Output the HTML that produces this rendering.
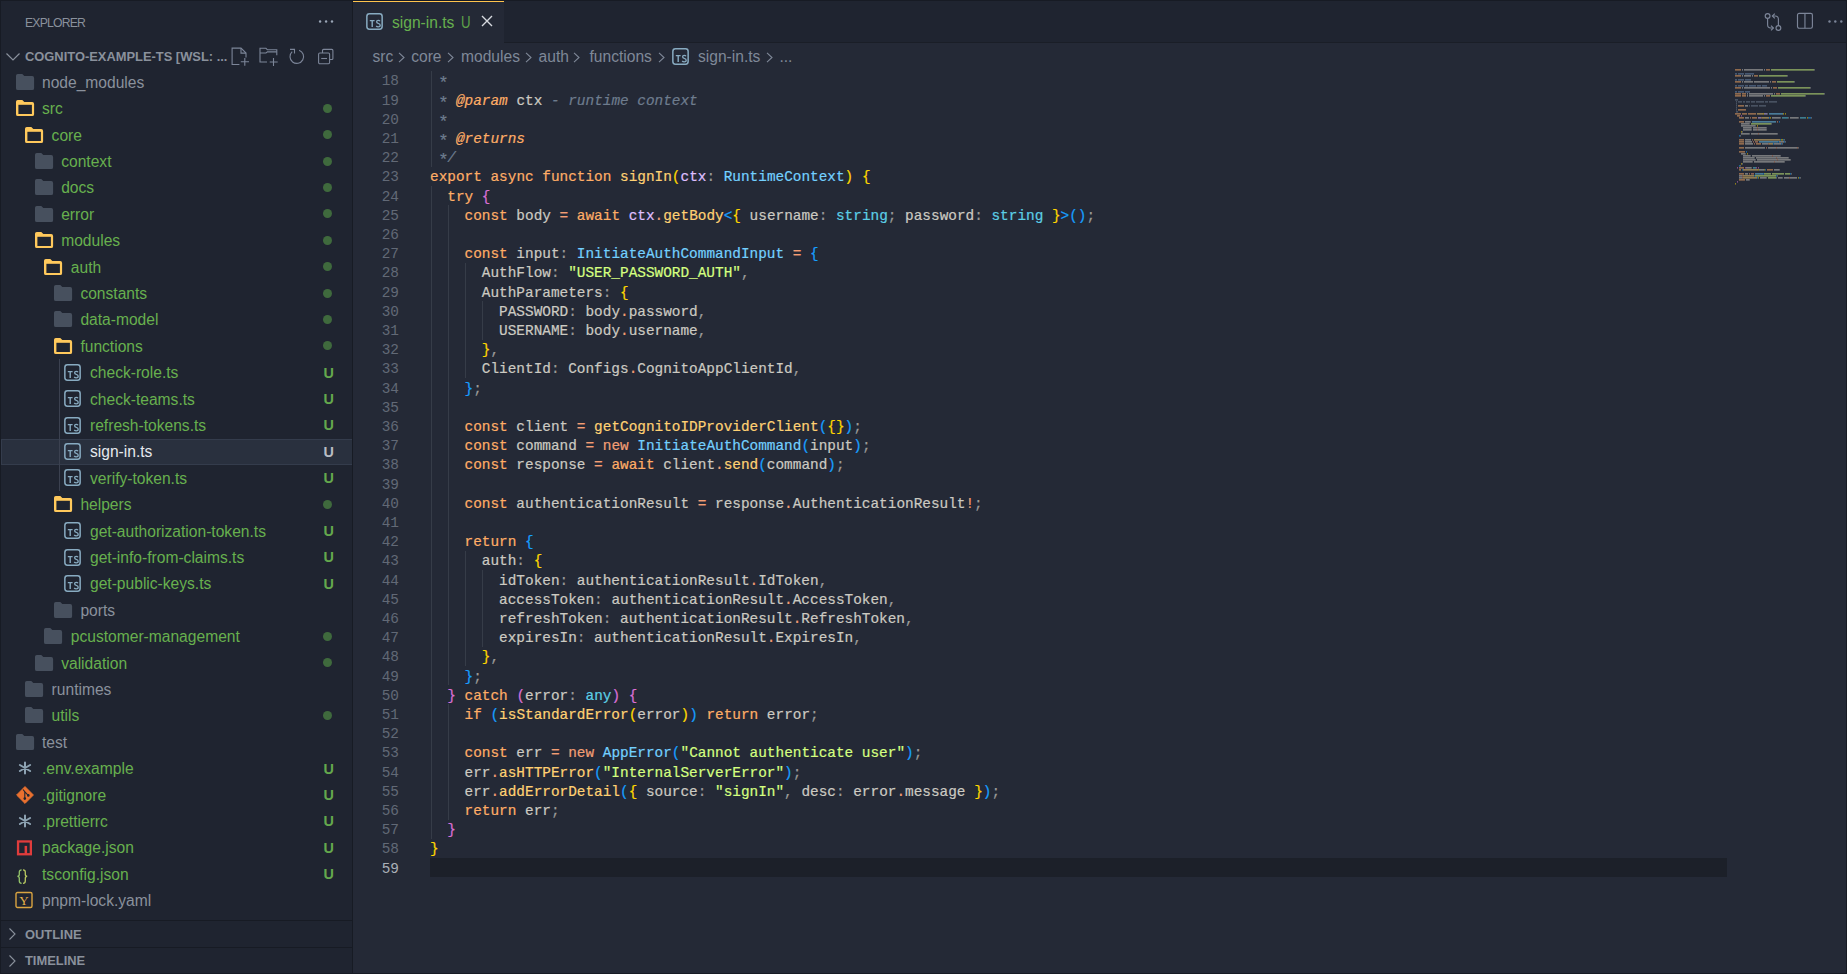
<!DOCTYPE html><html><head><meta charset="utf-8"><style>
*{margin:0;padding:0;box-sizing:border-box}
html,body{width:1847px;height:974px;overflow:hidden;background:#242936}
body{position:relative;font-family:"Liberation Sans",sans-serif}
.a{position:absolute} svg{display:block}
#sb{position:absolute;left:0;top:0;width:353px;height:974px;background:#1f2430;border-right:1px solid #171b24;overflow:hidden}
.row{position:absolute;left:0;width:352px;height:26.4px}
.row .tx{position:absolute;top:1.4px;line-height:26.4px;font-size:15.6px;white-space:nowrap}
.row .ic{position:absolute}
.g{color:#67b04e}
.gr{color:#8a919c}
.deco{position:absolute;left:323.4px;top:0.8px;line-height:26.4px;font-size:14.4px;font-weight:bold;color:#64a84d}
.dotd{position:absolute;left:323px;top:9px;width:9px;height:9px;border-radius:50%;background:#3f6a3d}
#ed{position:absolute;left:353px;top:0;right:0;bottom:0;background:#242936}
#tabs{position:absolute;left:0;top:0;right:0;height:42px;background:#1f2430}
#code{position:absolute;left:0;top:0;font-family:"Liberation Mono",monospace;font-size:14.4px;-webkit-text-stroke:0.2px currentColor}
.ln{-webkit-text-stroke:0;position:absolute;left:0;width:46px;text-align:right;height:19.2px;line-height:19.2px;padding-top:1.5px;color:#626976}
.cl{position:absolute;left:77px;height:19.2px;line-height:19.2px;padding-top:1.5px;white-space:pre;color:#cccac2}
.k{color:#ffad66} .f{color:#ffd173} .f2{color:#ffd173} .t{color:#73d0ff} .pr{color:#5ccfe6} .s{color:#d5ff80}
.v{color:#cccac2} .pp{color:#cccac2} .pa{color:#dfbfff} .pu{color:#9a9a98} .op{color:#f29e74} .dot{color:#f29e74}
.b1{color:#ffd700} .b2{color:#da70d6} .b3{color:#179fff}
.cm{color:#6e7c8e;font-style:italic} .ct{color:#ffad66;font-style:italic} .cv{color:#cccac2} .ast{display:inline-block;transform:translateY(2.8px) scale(1.2);font-style:normal}
.gd{position:absolute;width:1px;background:#363c48}
</style></head><body><div id="sb"><div class="a" style="left:25px;top:15.5px;font-size:12.2px;color:#8a919c;letter-spacing:-0.8px">EXPLORER</div><div class="a" style="left:318px;top:19.5px;width:16px;height:3px"><svg width="16" height="3" viewBox="0 0 16 3"><circle cx="2.1" cy="1.5" r="1.2" fill="#9aa6b6"/><circle cx="8.1" cy="1.5" r="1.2" fill="#9aa6b6"/><circle cx="14" cy="1.5" r="1.2" fill="#9aa6b6"/></svg></div><svg class="a" style="left:5px;top:50px" width="16" height="14" viewBox="0 0 16 14"><path d="M1.5 3.5 L8 10 L14.5 3.5" fill="none" stroke="#8a919c" stroke-width="1.2"/></svg><div class="a" style="left:25px;top:49px;font-size:12.9px;font-weight:bold;color:#8a919c;white-space:nowrap">COGNITO-EXAMPLE-TS [WSL: ...</div><svg class="a" style="left:231px;top:47px" width="20" height="20" viewBox="0 0 20 20" fill="none" stroke="#7c8598" stroke-width="1.1">
<path d="M8.4 17.5 H1.1 V1.1 H10 L15 6.1 V10.5"/><path d="M10 1.1 V6.1 H15"/><path d="M13.8 11 V18.8 M9.8 14.8 H18"/></svg><svg class="a" style="left:259px;top:47px" width="20" height="20" viewBox="0 0 20 20" fill="none" stroke="#7c8598" stroke-width="1.1">
<path d="M8 15 H1 V1.3 H7 L8.4 2.8 H17.8 V8.2"/><path d="M1 6 H7 L8.4 4.9 H17.8"/><path d="M14.5 11 V19 M10.7 15 H18.7"/></svg><svg class="a" style="left:288px;top:47px" width="18" height="18" viewBox="0 0 18 18" fill="none" stroke="#7c8598" stroke-width="1.1">
<path d="M11.1 3.2 A6.8 6.8 0 1 1 4.2 4.6"/><path d="M2 2.4 H6.5 V6.6"/></svg><svg class="a" style="left:317px;top:47px" width="18" height="18" viewBox="0 0 18 18" fill="none" stroke="#7c8598" stroke-width="1.1">
<path d="M5.5 6 V3.4 Q5.5 2.4 6.5 2.4 H14.9 Q15.9 2.4 15.9 3.4 V11.5 Q15.9 12.5 14.9 12.5 H12.6"/><rect x="1.6" y="6" width="11" height="10.7" rx="1.2"/><path d="M4.2 11.5 H10"/></svg><div class="row" style="top:68.4px"><svg class="ic" style="left:14.5px;top:4.4px" width="20" height="18" viewBox="0 0 20 18"><path d="M1 2.8 Q1 1 2.8 1 H7.3 L9.3 3 H17.2 Q19.1 3 19.1 4.9 V15.2 Q19.1 17.1 17.2 17.1 H2.8 Q1 17.1 1 15.2 Z" fill="#47505e"/></svg><div class="tx gr" style="left:42.0px">node_modules</div></div><div class="row" style="top:94.8px"><svg class="ic" style="left:14.5px;top:4.4px" width="20" height="18" viewBox="0 0 20 18"><path d="M1 2.8 Q1 1 2.8 1 H7.3 L9.3 3 H17.2 Q19.1 3 19.1 4.9 V15.2 Q19.1 17.1 17.2 17.1 H2.8 Q1 17.1 1 15.2 Z" fill="#ffc95c"/><rect x="3.4" y="5.8" width="13.5" height="9.2" fill="#1f2430"/></svg><div class="tx g" style="left:42.0px">src</div><div class="dotd"></div></div><div class="row" style="top:121.2px"><svg class="ic" style="left:24.1px;top:4.4px" width="20" height="18" viewBox="0 0 20 18"><path d="M1 2.8 Q1 1 2.8 1 H7.3 L9.3 3 H17.2 Q19.1 3 19.1 4.9 V15.2 Q19.1 17.1 17.2 17.1 H2.8 Q1 17.1 1 15.2 Z" fill="#ffc95c"/><rect x="3.4" y="5.8" width="13.5" height="9.2" fill="#1f2430"/></svg><div class="tx g" style="left:51.6px">core</div><div class="dotd"></div></div><div class="row" style="top:147.6px"><svg class="ic" style="left:33.7px;top:4.4px" width="20" height="18" viewBox="0 0 20 18"><path d="M1 2.8 Q1 1 2.8 1 H7.3 L9.3 3 H17.2 Q19.1 3 19.1 4.9 V15.2 Q19.1 17.1 17.2 17.1 H2.8 Q1 17.1 1 15.2 Z" fill="#47505e"/></svg><div class="tx g" style="left:61.2px">context</div><div class="dotd"></div></div><div class="row" style="top:174.0px"><svg class="ic" style="left:33.7px;top:4.4px" width="20" height="18" viewBox="0 0 20 18"><path d="M1 2.8 Q1 1 2.8 1 H7.3 L9.3 3 H17.2 Q19.1 3 19.1 4.9 V15.2 Q19.1 17.1 17.2 17.1 H2.8 Q1 17.1 1 15.2 Z" fill="#47505e"/></svg><div class="tx g" style="left:61.2px">docs</div><div class="dotd"></div></div><div class="row" style="top:200.4px"><svg class="ic" style="left:33.7px;top:4.4px" width="20" height="18" viewBox="0 0 20 18"><path d="M1 2.8 Q1 1 2.8 1 H7.3 L9.3 3 H17.2 Q19.1 3 19.1 4.9 V15.2 Q19.1 17.1 17.2 17.1 H2.8 Q1 17.1 1 15.2 Z" fill="#47505e"/></svg><div class="tx g" style="left:61.2px">error</div><div class="dotd"></div></div><div class="row" style="top:226.8px"><svg class="ic" style="left:33.7px;top:4.4px" width="20" height="18" viewBox="0 0 20 18"><path d="M1 2.8 Q1 1 2.8 1 H7.3 L9.3 3 H17.2 Q19.1 3 19.1 4.9 V15.2 Q19.1 17.1 17.2 17.1 H2.8 Q1 17.1 1 15.2 Z" fill="#ffc95c"/><rect x="3.4" y="5.8" width="13.5" height="9.2" fill="#1f2430"/></svg><div class="tx g" style="left:61.2px">modules</div><div class="dotd"></div></div><div class="row" style="top:253.2px"><svg class="ic" style="left:43.3px;top:4.4px" width="20" height="18" viewBox="0 0 20 18"><path d="M1 2.8 Q1 1 2.8 1 H7.3 L9.3 3 H17.2 Q19.1 3 19.1 4.9 V15.2 Q19.1 17.1 17.2 17.1 H2.8 Q1 17.1 1 15.2 Z" fill="#ffc95c"/><rect x="3.4" y="5.8" width="13.5" height="9.2" fill="#1f2430"/></svg><div class="tx g" style="left:70.8px">auth</div><div class="dotd"></div></div><div class="row" style="top:279.6px"><svg class="ic" style="left:52.900000000000006px;top:4.4px" width="20" height="18" viewBox="0 0 20 18"><path d="M1 2.8 Q1 1 2.8 1 H7.3 L9.3 3 H17.2 Q19.1 3 19.1 4.9 V15.2 Q19.1 17.1 17.2 17.1 H2.8 Q1 17.1 1 15.2 Z" fill="#47505e"/></svg><div class="tx g" style="left:80.4px">constants</div><div class="dotd"></div></div><div class="row" style="top:306.0px"><svg class="ic" style="left:52.900000000000006px;top:4.4px" width="20" height="18" viewBox="0 0 20 18"><path d="M1 2.8 Q1 1 2.8 1 H7.3 L9.3 3 H17.2 Q19.1 3 19.1 4.9 V15.2 Q19.1 17.1 17.2 17.1 H2.8 Q1 17.1 1 15.2 Z" fill="#47505e"/></svg><div class="tx g" style="left:80.4px">data-model</div><div class="dotd"></div></div><div class="row" style="top:332.4px"><svg class="ic" style="left:52.900000000000006px;top:4.4px" width="20" height="18" viewBox="0 0 20 18"><path d="M1 2.8 Q1 1 2.8 1 H7.3 L9.3 3 H17.2 Q19.1 3 19.1 4.9 V15.2 Q19.1 17.1 17.2 17.1 H2.8 Q1 17.1 1 15.2 Z" fill="#ffc95c"/><rect x="3.4" y="5.8" width="13.5" height="9.2" fill="#1f2430"/></svg><div class="tx g" style="left:80.4px">functions</div><div class="dotd"></div></div><div class="row" style="top:358.8px"><svg class="ic" style="left:64.0px;top:5.1px" width="17" height="17" viewBox="0 0 17 17" fill="none" stroke="#88abc1"><rect x="0.85" y="0.85" width="15.3" height="15.3" rx="2.6" stroke-width="1.5"/><path d="M3.8 7.6 H8.6 M6.2 7.6 V14.1" stroke-width="1.4"/><path d="M14.0 8.2 Q13.5 7.3 12.2 7.3 Q10.6 7.3 10.6 8.7 Q10.6 9.9 12.3 10.4 Q14.2 10.9 14.2 12.3 Q14.2 13.9 12.2 13.9 Q10.9 13.9 10.2 13" stroke-width="1.3"/></svg><div class="tx g" style="left:90.0px">check-role.ts</div><div class="deco">U</div></div><div class="row" style="top:385.2px"><svg class="ic" style="left:64.0px;top:5.1px" width="17" height="17" viewBox="0 0 17 17" fill="none" stroke="#88abc1"><rect x="0.85" y="0.85" width="15.3" height="15.3" rx="2.6" stroke-width="1.5"/><path d="M3.8 7.6 H8.6 M6.2 7.6 V14.1" stroke-width="1.4"/><path d="M14.0 8.2 Q13.5 7.3 12.2 7.3 Q10.6 7.3 10.6 8.7 Q10.6 9.9 12.3 10.4 Q14.2 10.9 14.2 12.3 Q14.2 13.9 12.2 13.9 Q10.9 13.9 10.2 13" stroke-width="1.3"/></svg><div class="tx g" style="left:90.0px">check-teams.ts</div><div class="deco">U</div></div><div class="row" style="top:411.6px"><svg class="ic" style="left:64.0px;top:5.1px" width="17" height="17" viewBox="0 0 17 17" fill="none" stroke="#88abc1"><rect x="0.85" y="0.85" width="15.3" height="15.3" rx="2.6" stroke-width="1.5"/><path d="M3.8 7.6 H8.6 M6.2 7.6 V14.1" stroke-width="1.4"/><path d="M14.0 8.2 Q13.5 7.3 12.2 7.3 Q10.6 7.3 10.6 8.7 Q10.6 9.9 12.3 10.4 Q14.2 10.9 14.2 12.3 Q14.2 13.9 12.2 13.9 Q10.9 13.9 10.2 13" stroke-width="1.3"/></svg><div class="tx g" style="left:90.0px">refresh-tokens.ts</div><div class="deco">U</div></div><div class="row" style="top:438.0px"><div class="a" style="left:1px;top:1.2px;width:351px;height:25.4px;background:#29303e;border-top:1px solid #343c4c;border-bottom:1px solid #343c4c;border-left:1px solid #343c4c"></div><svg class="ic" style="left:64.0px;top:5.1px" width="17" height="17" viewBox="0 0 17 17" fill="none" stroke="#88abc1"><rect x="0.85" y="0.85" width="15.3" height="15.3" rx="2.6" stroke-width="1.5"/><path d="M3.8 7.6 H8.6 M6.2 7.6 V14.1" stroke-width="1.4"/><path d="M14.0 8.2 Q13.5 7.3 12.2 7.3 Q10.6 7.3 10.6 8.7 Q10.6 9.9 12.3 10.4 Q14.2 10.9 14.2 12.3 Q14.2 13.9 12.2 13.9 Q10.9 13.9 10.2 13" stroke-width="1.3"/></svg><div class="tx gr" style="left:90.0px;color:#e6e9ee">sign-in.ts</div><div class="deco" style="color:#b8bcc3">U</div></div><div class="row" style="top:464.4px"><svg class="ic" style="left:64.0px;top:5.1px" width="17" height="17" viewBox="0 0 17 17" fill="none" stroke="#88abc1"><rect x="0.85" y="0.85" width="15.3" height="15.3" rx="2.6" stroke-width="1.5"/><path d="M3.8 7.6 H8.6 M6.2 7.6 V14.1" stroke-width="1.4"/><path d="M14.0 8.2 Q13.5 7.3 12.2 7.3 Q10.6 7.3 10.6 8.7 Q10.6 9.9 12.3 10.4 Q14.2 10.9 14.2 12.3 Q14.2 13.9 12.2 13.9 Q10.9 13.9 10.2 13" stroke-width="1.3"/></svg><div class="tx g" style="left:90.0px">verify-token.ts</div><div class="deco">U</div></div><div class="row" style="top:490.8px"><svg class="ic" style="left:52.900000000000006px;top:4.4px" width="20" height="18" viewBox="0 0 20 18"><path d="M1 2.8 Q1 1 2.8 1 H7.3 L9.3 3 H17.2 Q19.1 3 19.1 4.9 V15.2 Q19.1 17.1 17.2 17.1 H2.8 Q1 17.1 1 15.2 Z" fill="#ffc95c"/><rect x="3.4" y="5.8" width="13.5" height="9.2" fill="#1f2430"/></svg><div class="tx g" style="left:80.4px">helpers</div><div class="dotd"></div></div><div class="row" style="top:517.2px"><svg class="ic" style="left:64.0px;top:5.1px" width="17" height="17" viewBox="0 0 17 17" fill="none" stroke="#88abc1"><rect x="0.85" y="0.85" width="15.3" height="15.3" rx="2.6" stroke-width="1.5"/><path d="M3.8 7.6 H8.6 M6.2 7.6 V14.1" stroke-width="1.4"/><path d="M14.0 8.2 Q13.5 7.3 12.2 7.3 Q10.6 7.3 10.6 8.7 Q10.6 9.9 12.3 10.4 Q14.2 10.9 14.2 12.3 Q14.2 13.9 12.2 13.9 Q10.9 13.9 10.2 13" stroke-width="1.3"/></svg><div class="tx g" style="left:90.0px">get-authorization-token.ts</div><div class="deco">U</div></div><div class="row" style="top:543.6px"><svg class="ic" style="left:64.0px;top:5.1px" width="17" height="17" viewBox="0 0 17 17" fill="none" stroke="#88abc1"><rect x="0.85" y="0.85" width="15.3" height="15.3" rx="2.6" stroke-width="1.5"/><path d="M3.8 7.6 H8.6 M6.2 7.6 V14.1" stroke-width="1.4"/><path d="M14.0 8.2 Q13.5 7.3 12.2 7.3 Q10.6 7.3 10.6 8.7 Q10.6 9.9 12.3 10.4 Q14.2 10.9 14.2 12.3 Q14.2 13.9 12.2 13.9 Q10.9 13.9 10.2 13" stroke-width="1.3"/></svg><div class="tx g" style="left:90.0px">get-info-from-claims.ts</div><div class="deco">U</div></div><div class="row" style="top:570.0px"><svg class="ic" style="left:64.0px;top:5.1px" width="17" height="17" viewBox="0 0 17 17" fill="none" stroke="#88abc1"><rect x="0.85" y="0.85" width="15.3" height="15.3" rx="2.6" stroke-width="1.5"/><path d="M3.8 7.6 H8.6 M6.2 7.6 V14.1" stroke-width="1.4"/><path d="M14.0 8.2 Q13.5 7.3 12.2 7.3 Q10.6 7.3 10.6 8.7 Q10.6 9.9 12.3 10.4 Q14.2 10.9 14.2 12.3 Q14.2 13.9 12.2 13.9 Q10.9 13.9 10.2 13" stroke-width="1.3"/></svg><div class="tx g" style="left:90.0px">get-public-keys.ts</div><div class="deco">U</div></div><div class="row" style="top:596.4px"><svg class="ic" style="left:52.900000000000006px;top:4.4px" width="20" height="18" viewBox="0 0 20 18"><path d="M1 2.8 Q1 1 2.8 1 H7.3 L9.3 3 H17.2 Q19.1 3 19.1 4.9 V15.2 Q19.1 17.1 17.2 17.1 H2.8 Q1 17.1 1 15.2 Z" fill="#47505e"/></svg><div class="tx gr" style="left:80.4px">ports</div></div><div class="row" style="top:622.8px"><svg class="ic" style="left:43.3px;top:4.4px" width="20" height="18" viewBox="0 0 20 18"><path d="M1 2.8 Q1 1 2.8 1 H7.3 L9.3 3 H17.2 Q19.1 3 19.1 4.9 V15.2 Q19.1 17.1 17.2 17.1 H2.8 Q1 17.1 1 15.2 Z" fill="#47505e"/></svg><div class="tx g" style="left:70.8px">pcustomer-management</div><div class="dotd"></div></div><div class="row" style="top:649.2px"><svg class="ic" style="left:33.7px;top:4.4px" width="20" height="18" viewBox="0 0 20 18"><path d="M1 2.8 Q1 1 2.8 1 H7.3 L9.3 3 H17.2 Q19.1 3 19.1 4.9 V15.2 Q19.1 17.1 17.2 17.1 H2.8 Q1 17.1 1 15.2 Z" fill="#47505e"/></svg><div class="tx g" style="left:61.2px">validation</div><div class="dotd"></div></div><div class="row" style="top:675.6px"><svg class="ic" style="left:24.1px;top:4.4px" width="20" height="18" viewBox="0 0 20 18"><path d="M1 2.8 Q1 1 2.8 1 H7.3 L9.3 3 H17.2 Q19.1 3 19.1 4.9 V15.2 Q19.1 17.1 17.2 17.1 H2.8 Q1 17.1 1 15.2 Z" fill="#47505e"/></svg><div class="tx gr" style="left:51.6px">runtimes</div></div><div class="row" style="top:702.0px"><svg class="ic" style="left:24.1px;top:4.4px" width="20" height="18" viewBox="0 0 20 18"><path d="M1 2.8 Q1 1 2.8 1 H7.3 L9.3 3 H17.2 Q19.1 3 19.1 4.9 V15.2 Q19.1 17.1 17.2 17.1 H2.8 Q1 17.1 1 15.2 Z" fill="#47505e"/></svg><div class="tx g" style="left:51.6px">utils</div><div class="dotd"></div></div><div class="row" style="top:728.4px"><svg class="ic" style="left:14.5px;top:4.4px" width="20" height="18" viewBox="0 0 20 18"><path d="M1 2.8 Q1 1 2.8 1 H7.3 L9.3 3 H17.2 Q19.1 3 19.1 4.9 V15.2 Q19.1 17.1 17.2 17.1 H2.8 Q1 17.1 1 15.2 Z" fill="#47505e"/></svg><div class="tx gr" style="left:42.0px">test</div></div><div class="row" style="top:754.8px"><svg class="ic" style="left:14.5px;top:3.7px" width="20" height="20" viewBox="0 0 20 20" stroke="#8ea3b3" stroke-width="2" stroke-linecap="round"><path d="M10 4.6 V15.4 M4.9 7 L15.1 13 M4.9 13 L15.1 7"/></svg><div class="tx g" style="left:42.0px">.env.example</div><div class="deco">U</div></div><div class="row" style="top:781.2px"><svg class="ic" style="left:14.5px;top:3.7px" width="20" height="20" viewBox="0 0 20 20"><path d="M10 1.6 L18.4 10 L10 18.4 L1.6 10 Z" fill="#e8702f" stroke="#e8702f" stroke-width="1" stroke-linejoin="round"/><path d="M8 4.5 L9.8 6.6 V13.5 M9.2 6.2 L13.2 10.3" stroke="#1f2430" stroke-width="1.1" fill="none"/><circle cx="9.8" cy="13.6" r="1.3" fill="#1f2430"/><circle cx="13.3" cy="10.4" r="1.3" fill="#1f2430"/></svg><div class="tx g" style="left:42.0px">.gitignore</div><div class="deco">U</div></div><div class="row" style="top:807.6px"><svg class="ic" style="left:14.5px;top:3.7px" width="20" height="20" viewBox="0 0 20 20" stroke="#8ea3b3" stroke-width="2" stroke-linecap="round"><path d="M10 4.6 V15.4 M4.9 7 L15.1 13 M4.9 13 L15.1 7"/></svg><div class="tx g" style="left:42.0px">.prettierrc</div><div class="deco">U</div></div><div class="row" style="top:834.0px"><svg class="ic" style="left:16px;top:5.6px" width="17" height="17" viewBox="0 0 17 17"><rect x="2.05" y="1.45" width="12.8" height="12.8" fill="none" stroke="#e03c3c" stroke-width="2.3"/><rect x="8.6" y="5.9" width="2.5" height="8" fill="#e03c3c"/></svg><div class="tx g" style="left:42.0px">package.json</div><div class="deco">U</div></div><div class="row" style="top:860.4px"><svg class="ic" style="left:16px;top:8.5px" width="14" height="16" viewBox="0 0 14 16" fill="none" stroke-width="1.3"><path d="M5.6 0.8 Q3.3 0.8 3.3 3 V5.6 Q3.3 7.4 1.4 7.4 Q3.3 7.4 3.3 9.3 V12 Q3.3 14.3 5.6 14.3" stroke="#93c46a"/><path d="M7 0.8 Q9.3 0.8 9.3 3 V5.6 Q9.3 7.4 11.2 7.4 Q9.3 7.4 9.3 9.3 V12 Q9.3 14.3 7 14.3" stroke="#b9c860"/></svg><div class="tx g" style="left:42.0px">tsconfig.json</div><div class="deco">U</div></div><div class="row" style="top:886.8px"><svg class="ic" style="left:14.5px;top:4.2px" width="18" height="18" viewBox="0 0 18 18"><rect x="1" y="1.5" width="16" height="15" rx="1.5" fill="none" stroke="#d9a441" stroke-width="1.4"/><text x="9" y="14" font-family="Liberation Serif" font-size="13" fill="#e8b34a" text-anchor="middle">Y</text></svg><div class="tx gr" style="left:42.0px">pnpm-lock.yaml</div></div><div class="a" style="left:59px;top:358.8px;width:1px;height:132.0px;background:#3b4150"></div><div class="a" style="left:0;top:920.2px;width:352px;height:1px;background:#171b24"></div><svg class="a" style="left:5px;top:926.7px" width="14" height="14" viewBox="0 0 14 14"><path d="M4.5 1.5 L10 7 L4.5 12.5" fill="none" stroke="#8a919c" stroke-width="1.1"/></svg><div class="a" style="left:25px;top:926.5px;font-size:12.9px;font-weight:bold;color:#8a919c">OUTLINE</div><div class="a" style="left:0;top:947.1px;width:352px;height:1px;background:#171b24"></div><svg class="a" style="left:5px;top:953.6px" width="14" height="14" viewBox="0 0 14 14"><path d="M4.5 1.5 L10 7 L4.5 12.5" fill="none" stroke="#8a919c" stroke-width="1.1"/></svg><div class="a" style="left:25px;top:953.4px;font-size:12.9px;font-weight:bold;color:#8a919c">TIMELINE</div></div><div id="ed"><div id="tabs"></div><div class="a" style="left:0;top:0;width:151px;height:43px;background:#242936"></div><div class="a" style="left:0;top:1px;width:151px;height:1.2px;background:#ffc44d"></div><div class="a" style="left:12.5px;top:12.5px"><svg class="a" style="left:0px;top:0px" width="17" height="17" viewBox="0 0 17 17" fill="none" stroke="#88abc1"><rect x="0.85" y="0.85" width="15.3" height="15.3" rx="2.6" stroke-width="1.5"/><path d="M3.8 7.6 H8.6 M6.2 7.6 V14.1" stroke-width="1.4"/><path d="M14.0 8.2 Q13.5 7.3 12.2 7.3 Q10.6 7.3 10.6 8.7 Q10.6 9.9 12.3 10.4 Q14.2 10.9 14.2 12.3 Q14.2 13.9 12.2 13.9 Q10.9 13.9 10.2 13" stroke-width="1.3"/></svg></div><div class="a" style="left:39px;top:13.5px;font-size:15.6px;color:#67b04e;white-space:nowrap">sign-in.ts</div><div class="a" style="left:108px;top:13.5px;font-size:15.6px;color:#5ea049;transform:scaleX(0.85);transform-origin:0 0">U</div><svg class="a" style="left:127px;top:14px" width="14" height="14" viewBox="0 0 14 14"><path d="M2 2 L12 12 M12 2 L2 12" stroke="#d7dae0" stroke-width="1.4"/></svg><svg class="a" style="left:1411px;top:12px" width="22" height="22" viewBox="0 0 22 22" fill="none" stroke="#7c8598" stroke-width="1.15"><circle cx="3.6" cy="4" r="2.4"/><circle cx="14.4" cy="16" r="2.4"/><path d="M3.6 6.4 V12.8 Q3.6 16 6.8 16 H9.4"/><path d="M7 13.6 L9.4 16 L7 18.4"/><path d="M14.4 13.6 V7.2 Q14.4 4 11.2 4 H8.4"/><path d="M10.8 1.6 L8.4 4 L10.8 6.4"/></svg><svg class="a" style="left:1443px;top:12px" width="18" height="18" viewBox="0 0 18 18" fill="none" stroke="#7c8598" stroke-width="1.15"><rect x="1.5" y="1.4" width="14.9" height="14.8" rx="1.6"/><path d="M8.95 1.4 V16.2"/></svg><svg class="a" style="left:1475px;top:20px" width="16" height="3" viewBox="0 0 16 3"><circle cx="1.5" cy="1.5" r="1.2" fill="#7c8598"/><circle cx="7.3" cy="1.5" r="1.2" fill="#7c8598"/><circle cx="13.3" cy="1.5" r="1.2" fill="#7c8598"/></svg><div class="a" style="left:151px;top:42px;right:0;height:1px;background:#1a1e27"></div><div class="a" style="left:19.5px;top:47.6px;font-size:15.6px;color:#7f8898;white-space:nowrap">src</div><div class="a" style="left:58.2px;top:47.6px;font-size:15.6px;color:#7f8898;white-space:nowrap">core</div><div class="a" style="left:108px;top:47.6px;font-size:15.6px;color:#7f8898;white-space:nowrap">modules</div><div class="a" style="left:185.6px;top:47.6px;font-size:15.6px;color:#7f8898;white-space:nowrap">auth</div><div class="a" style="left:236.5px;top:47.6px;font-size:15.6px;color:#7f8898;white-space:nowrap">functions</div><div class="a" style="left:345px;top:47.6px;font-size:15.6px;color:#7f8898;white-space:nowrap">sign-in.ts</div><div class="a" style="left:426.4px;top:47.6px;font-size:15.6px;color:#7f8898;white-space:nowrap">...</div><svg class="a" style="left:44.7px;top:52px" width="9" height="12" viewBox="0 0 9 12"><path d="M1 0.8 L6 5.5 L1 10.2" fill="none" stroke="#7f8898" stroke-width="1.1"/></svg><svg class="a" style="left:93.9px;top:52px" width="9" height="12" viewBox="0 0 9 12"><path d="M1 0.8 L6 5.5 L1 10.2" fill="none" stroke="#7f8898" stroke-width="1.1"/></svg><svg class="a" style="left:172.0px;top:52px" width="9" height="12" viewBox="0 0 9 12"><path d="M1 0.8 L6 5.5 L1 10.2" fill="none" stroke="#7f8898" stroke-width="1.1"/></svg><svg class="a" style="left:220.0px;top:52px" width="9" height="12" viewBox="0 0 9 12"><path d="M1 0.8 L6 5.5 L1 10.2" fill="none" stroke="#7f8898" stroke-width="1.1"/></svg><svg class="a" style="left:304.6px;top:52px" width="9" height="12" viewBox="0 0 9 12"><path d="M1 0.8 L6 5.5 L1 10.2" fill="none" stroke="#7f8898" stroke-width="1.1"/></svg><svg class="a" style="left:413.0px;top:52px" width="9" height="12" viewBox="0 0 9 12"><path d="M1 0.8 L6 5.5 L1 10.2" fill="none" stroke="#7f8898" stroke-width="1.1"/></svg><div class="a" style="left:318.5px;top:47.5px"><svg class="a" style="left:0px;top:0px" width="17" height="17" viewBox="0 0 17 17" fill="none" stroke="#88abc1"><rect x="0.85" y="0.85" width="15.3" height="15.3" rx="2.6" stroke-width="1.5"/><path d="M3.8 7.6 H8.6 M6.2 7.6 V14.1" stroke-width="1.4"/><path d="M14.0 8.2 Q13.5 7.3 12.2 7.3 Q10.6 7.3 10.6 8.7 Q10.6 9.9 12.3 10.4 Q14.2 10.9 14.2 12.3 Q14.2 13.9 12.2 13.9 Q10.9 13.9 10.2 13" stroke-width="1.3"/></svg></div><div id="code" style="left:0;top:0;width:1400px;height:974px"><div class="a" style="left:77px;top:858px;width:1297px;height:19px;background:#1c2029"></div><div class="ln" style="top:70.80px">18</div><div class="cl" style="top:70.80px"><span class="cm"> <span class="ast">*</span></span></div><div class="ln" style="top:90.00px">19</div><div class="cl" style="top:90.00px"><span class="cm"> <span class="ast">*</span> </span><span class="ct">@param</span><span class="cm"> </span><span class="cv">ctx</span><span class="cm"> - runtime context</span></div><div class="ln" style="top:109.20px">20</div><div class="cl" style="top:109.20px"><span class="cm"> <span class="ast">*</span></span></div><div class="ln" style="top:128.40px">21</div><div class="cl" style="top:128.40px"><span class="cm"> <span class="ast">*</span> </span><span class="ct">@returns</span></div><div class="ln" style="top:147.60px">22</div><div class="cl" style="top:147.60px"><span class="cm"> <span class="ast">*</span>/</span></div><div class="ln" style="top:166.80px">23</div><div class="cl" style="top:166.80px"><span class="k">export</span><span class="v"> </span><span class="k">async</span><span class="v"> </span><span class="k">function</span><span class="v"> </span><span class="f">signIn</span><span class="b1">(</span><span class="pa">ctx</span><span class="pu">: </span><span class="t">RuntimeContext</span><span class="b1">)</span><span class="v"> </span><span class="b1">{</span></div><div class="ln" style="top:186.00px">24</div><div class="cl" style="top:186.00px"><span class="v">  </span><span class="k">try</span><span class="v"> </span><span class="b2">{</span></div><div class="ln" style="top:205.20px">25</div><div class="cl" style="top:205.20px"><span class="v">    </span><span class="k">const</span><span class="v"> body </span><span class="op">=</span><span class="v"> </span><span class="k">await</span><span class="v"> </span><span class="pa">ctx</span><span class="dot">.</span><span class="f">getBody</span><span class="b3">&lt;</span><span class="b1">{</span><span class="v"> </span><span class="pp">username</span><span class="pu">: </span><span class="pr">string</span><span class="pu">; </span><span class="pp">password</span><span class="pu">: </span><span class="pr">string</span><span class="v"> </span><span class="b1">}</span><span class="b3">&gt;()</span><span class="pu">;</span></div><div class="ln" style="top:224.40px">26</div><div class="ln" style="top:243.60px">27</div><div class="cl" style="top:243.60px"><span class="v">    </span><span class="k">const</span><span class="v"> input</span><span class="pu">: </span><span class="t">InitiateAuthCommandInput</span><span class="v"> </span><span class="op">=</span><span class="v"> </span><span class="b3">{</span></div><div class="ln" style="top:262.80px">28</div><div class="cl" style="top:262.80px"><span class="v">      AuthFlow</span><span class="pu">: </span><span class="s">&quot;USER_PASSWORD_AUTH&quot;</span><span class="pu">,</span></div><div class="ln" style="top:282.00px">29</div><div class="cl" style="top:282.00px"><span class="v">      AuthParameters</span><span class="pu">: </span><span class="b1">{</span></div><div class="ln" style="top:301.20px">30</div><div class="cl" style="top:301.20px"><span class="v">        PASSWORD</span><span class="pu">: </span><span class="v">body</span><span class="dot">.</span><span class="v">password</span><span class="pu">,</span></div><div class="ln" style="top:320.40px">31</div><div class="cl" style="top:320.40px"><span class="v">        USERNAME</span><span class="pu">: </span><span class="v">body</span><span class="dot">.</span><span class="v">username</span><span class="pu">,</span></div><div class="ln" style="top:339.60px">32</div><div class="cl" style="top:339.60px"><span class="v">      </span><span class="b1">}</span><span class="pu">,</span></div><div class="ln" style="top:358.80px">33</div><div class="cl" style="top:358.80px"><span class="v">      ClientId</span><span class="pu">: </span><span class="v">Configs</span><span class="dot">.</span><span class="v">CognitoAppClientId</span><span class="pu">,</span></div><div class="ln" style="top:378.00px">34</div><div class="cl" style="top:378.00px"><span class="v">    </span><span class="b3">}</span><span class="pu">;</span></div><div class="ln" style="top:397.20px">35</div><div class="ln" style="top:416.40px">36</div><div class="cl" style="top:416.40px"><span class="v">    </span><span class="k">const</span><span class="v"> client </span><span class="op">=</span><span class="v"> </span><span class="f">getCognitoIDProviderClient</span><span class="b3">(</span><span class="b1">{}</span><span class="b3">)</span><span class="pu">;</span></div><div class="ln" style="top:435.60px">37</div><div class="cl" style="top:435.60px"><span class="v">    </span><span class="k">const</span><span class="v"> command </span><span class="op">=</span><span class="v"> </span><span class="op">new</span><span class="v"> </span><span class="t">InitiateAuthCommand</span><span class="b3">(</span><span class="v">input</span><span class="b3">)</span><span class="pu">;</span></div><div class="ln" style="top:454.80px">38</div><div class="cl" style="top:454.80px"><span class="v">    </span><span class="k">const</span><span class="v"> response </span><span class="op">=</span><span class="v"> </span><span class="k">await</span><span class="v"> client</span><span class="dot">.</span><span class="f">send</span><span class="b3">(</span><span class="v">command</span><span class="b3">)</span><span class="pu">;</span></div><div class="ln" style="top:474.00px">39</div><div class="ln" style="top:493.20px">40</div><div class="cl" style="top:493.20px"><span class="v">    </span><span class="k">const</span><span class="v"> authenticationResult </span><span class="op">=</span><span class="v"> response</span><span class="dot">.</span><span class="v">AuthenticationResult</span><span class="op">!</span><span class="pu">;</span></div><div class="ln" style="top:512.40px">41</div><div class="ln" style="top:531.60px">42</div><div class="cl" style="top:531.60px"><span class="v">    </span><span class="k">return</span><span class="v"> </span><span class="b3">{</span></div><div class="ln" style="top:550.80px">43</div><div class="cl" style="top:550.80px"><span class="v">      auth</span><span class="pu">: </span><span class="b1">{</span></div><div class="ln" style="top:570.00px">44</div><div class="cl" style="top:570.00px"><span class="v">        idToken</span><span class="pu">: </span><span class="v">authenticationResult</span><span class="dot">.</span><span class="v">IdToken</span><span class="pu">,</span></div><div class="ln" style="top:589.20px">45</div><div class="cl" style="top:589.20px"><span class="v">        accessToken</span><span class="pu">: </span><span class="v">authenticationResult</span><span class="dot">.</span><span class="v">AccessToken</span><span class="pu">,</span></div><div class="ln" style="top:608.40px">46</div><div class="cl" style="top:608.40px"><span class="v">        refreshToken</span><span class="pu">: </span><span class="v">authenticationResult</span><span class="dot">.</span><span class="v">RefreshToken</span><span class="pu">,</span></div><div class="ln" style="top:627.60px">47</div><div class="cl" style="top:627.60px"><span class="v">        expiresIn</span><span class="pu">: </span><span class="v">authenticationResult</span><span class="dot">.</span><span class="v">ExpiresIn</span><span class="pu">,</span></div><div class="ln" style="top:646.80px">48</div><div class="cl" style="top:646.80px"><span class="v">      </span><span class="b1">}</span><span class="pu">,</span></div><div class="ln" style="top:666.00px">49</div><div class="cl" style="top:666.00px"><span class="v">    </span><span class="b3">}</span><span class="pu">;</span></div><div class="ln" style="top:685.20px">50</div><div class="cl" style="top:685.20px"><span class="v">  </span><span class="b2">}</span><span class="v"> </span><span class="k">catch</span><span class="v"> </span><span class="b2">(</span><span class="v">error</span><span class="pu">: </span><span class="pr">any</span><span class="b2">)</span><span class="v"> </span><span class="b2">{</span></div><div class="ln" style="top:704.40px">51</div><div class="cl" style="top:704.40px"><span class="v">    </span><span class="k">if</span><span class="v"> </span><span class="b3">(</span><span class="f2">isStandardError</span><span class="b1">(</span><span class="v">error</span><span class="b1">)</span><span class="b3">)</span><span class="v"> </span><span class="k">return</span><span class="v"> error</span><span class="pu">;</span></div><div class="ln" style="top:723.60px">52</div><div class="ln" style="top:742.80px">53</div><div class="cl" style="top:742.80px"><span class="v">    </span><span class="k">const</span><span class="v"> err </span><span class="op">=</span><span class="v"> </span><span class="op">new</span><span class="v"> </span><span class="t">AppError</span><span class="b3">(</span><span class="s">&quot;Cannot authenticate user&quot;</span><span class="b3">)</span><span class="pu">;</span></div><div class="ln" style="top:762.00px">54</div><div class="cl" style="top:762.00px"><span class="v">    err</span><span class="dot">.</span><span class="f">asHTTPError</span><span class="b3">(</span><span class="s">&quot;InternalServerError&quot;</span><span class="b3">)</span><span class="pu">;</span></div><div class="ln" style="top:781.20px">55</div><div class="cl" style="top:781.20px"><span class="v">    err</span><span class="dot">.</span><span class="f">addErrorDetail</span><span class="b3">(</span><span class="b1">{</span><span class="v"> source</span><span class="pu">: </span><span class="s">&quot;signIn&quot;</span><span class="pu">, </span><span class="v">desc</span><span class="pu">: </span><span class="v">error</span><span class="dot">.</span><span class="v">message</span><span class="v"> </span><span class="b1">}</span><span class="b3">)</span><span class="pu">;</span></div><div class="ln" style="top:800.40px">56</div><div class="cl" style="top:800.40px"><span class="v">    </span><span class="k">return</span><span class="v"> err</span><span class="pu">;</span></div><div class="ln" style="top:819.60px">57</div><div class="cl" style="top:819.60px"><span class="v">  </span><span class="b2">}</span></div><div class="ln" style="top:838.80px">58</div><div class="cl" style="top:838.80px"><span class="b1">}</span></div><div class="ln" style="top:858.00px;color:#aab0b8">59</div><div class="gd" style="left:77.6px;top:70.80px;height:96.00px"></div><div class="gd" style="left:77.6px;top:186.00px;height:652.80px"></div><div class="gd" style="left:94.9px;top:205.20px;height:480.00px"></div><div class="gd" style="left:94.9px;top:704.40px;height:115.20px"></div><div class="gd" style="left:112.1px;top:262.80px;height:115.20px"></div><div class="gd" style="left:112.1px;top:550.80px;height:115.20px"></div><div class="gd" style="left:129.4px;top:301.20px;height:38.40px"></div><div class="gd" style="left:129.4px;top:570.00px;height:76.80px"></div></div><svg class="a" style="left:1382px;top:69.3px;opacity:0.55" width="120" height="120" viewBox="0 0 120 120"><rect x="0" y="0.1" width="6" height="1.5" fill="#ffad66"/><rect x="7" y="0.1" width="1" height="1.5" fill="#cccac2"/><rect x="9" y="0.1" width="19" height="1.5" fill="#cccac2"/><rect x="29" y="0.1" width="1" height="1.5" fill="#cccac2"/><rect x="31" y="0.1" width="4" height="1.5" fill="#ffad66"/><rect x="36" y="0.1" width="43" height="1.5" fill="#d5ff80"/><rect x="79" y="0.1" width="1" height="1.5" fill="#9a9a98"/><rect x="0" y="4.1" width="2" height="1.5" fill="#6a8ab0"/><rect x="3" y="4.1" width="6" height="1.5" fill="#6a8ab0"/><rect x="10" y="4.1" width="9" height="1.5" fill="#6a8ab0"/><rect x="0" y="6.1" width="6" height="1.5" fill="#ffad66"/><rect x="7" y="6.1" width="1" height="1.5" fill="#cccac2"/><rect x="9" y="6.1" width="7" height="1.5" fill="#cccac2"/><rect x="17" y="6.1" width="1" height="1.5" fill="#cccac2"/><rect x="19" y="6.1" width="4" height="1.5" fill="#ffad66"/><rect x="24" y="6.1" width="28" height="1.5" fill="#d5ff80"/><rect x="52" y="6.1" width="1" height="1.5" fill="#9a9a98"/><rect x="0" y="10.1" width="2" height="1.5" fill="#6a8ab0"/><rect x="3" y="10.1" width="6" height="1.5" fill="#6a8ab0"/><rect x="10" y="10.1" width="6" height="1.5" fill="#6a8ab0"/><rect x="0" y="12.1" width="6" height="1.5" fill="#ffad66"/><rect x="7" y="12.1" width="1" height="1.5" fill="#cccac2"/><rect x="9" y="12.1" width="9" height="1.5" fill="#cccac2"/><rect x="19" y="12.1" width="15" height="1.5" fill="#cccac2"/><rect x="35" y="12.1" width="1" height="1.5" fill="#cccac2"/><rect x="37" y="12.1" width="4" height="1.5" fill="#ffad66"/><rect x="42" y="12.1" width="17" height="1.5" fill="#d5ff80"/><rect x="59" y="12.1" width="1" height="1.5" fill="#9a9a98"/><rect x="0" y="16.1" width="2" height="1.5" fill="#6a8ab0"/><rect x="3" y="16.1" width="6" height="1.5" fill="#6a8ab0"/><rect x="10" y="16.1" width="3" height="1.5" fill="#6a8ab0"/><rect x="14" y="16.1" width="7" height="1.5" fill="#6a8ab0"/><rect x="22" y="16.1" width="4" height="1.5" fill="#6a8ab0"/><rect x="27" y="16.1" width="5" height="1.5" fill="#6a8ab0"/><rect x="0" y="18.1" width="6" height="1.5" fill="#ffad66"/><rect x="7" y="18.1" width="1" height="1.5" fill="#cccac2"/><rect x="9" y="18.1" width="26" height="1.5" fill="#cccac2"/><rect x="36" y="18.1" width="1" height="1.5" fill="#cccac2"/><rect x="38" y="18.1" width="4" height="1.5" fill="#ffad66"/><rect x="43" y="18.1" width="32" height="1.5" fill="#d5ff80"/><rect x="75" y="18.1" width="1" height="1.5" fill="#9a9a98"/><rect x="0" y="22.1" width="2" height="1.5" fill="#6a8ab0"/><rect x="3" y="22.1" width="6" height="1.5" fill="#6a8ab0"/><rect x="10" y="22.1" width="5" height="1.5" fill="#6a8ab0"/><rect x="0" y="24.1" width="6" height="1.5" fill="#ffad66"/><rect x="7" y="24.1" width="4" height="1.5" fill="#ffad66"/><rect x="12" y="24.1" width="1" height="1.5" fill="#cccac2"/><rect x="14" y="24.1" width="24" height="1.5" fill="#cccac2"/><rect x="39" y="24.1" width="1" height="1.5" fill="#cccac2"/><rect x="41" y="24.1" width="4" height="1.5" fill="#ffad66"/><rect x="46" y="24.1" width="43" height="1.5" fill="#d5ff80"/><rect x="89" y="24.1" width="1" height="1.5" fill="#9a9a98"/><rect x="0" y="26.1" width="6" height="1.5" fill="#ffad66"/><rect x="7" y="26.1" width="4" height="1.5" fill="#ffad66"/><rect x="12" y="26.1" width="1" height="1.5" fill="#cccac2"/><rect x="14" y="26.1" width="14" height="1.5" fill="#cccac2"/><rect x="29" y="26.1" width="1" height="1.5" fill="#cccac2"/><rect x="31" y="26.1" width="4" height="1.5" fill="#ffad66"/><rect x="36" y="26.1" width="34" height="1.5" fill="#d5ff80"/><rect x="70" y="26.1" width="1" height="1.5" fill="#9a9a98"/><rect x="0" y="30.1" width="3" height="1.5" fill="#6e7c8e"/><rect x="1" y="32.1" width="1" height="1.5" fill="#6e7c8e"/><rect x="3" y="32.1" width="4" height="1.5" fill="#6e7c8e"/><rect x="8" y="32.1" width="2" height="1.5" fill="#6e7c8e"/><rect x="11" y="32.1" width="4" height="1.5" fill="#6e7c8e"/><rect x="16" y="32.1" width="4" height="1.5" fill="#6e7c8e"/><rect x="21" y="32.1" width="8" height="1.5" fill="#6e7c8e"/><rect x="30" y="32.1" width="3" height="1.5" fill="#6e7c8e"/><rect x="34" y="32.1" width="8" height="1.5" fill="#6e7c8e"/><rect x="1" y="34.1" width="1" height="1.5" fill="#6e7c8e"/><rect x="1" y="36.1" width="1" height="1.5" fill="#6e7c8e"/><rect x="3" y="36.1" width="6" height="1.5" fill="#ffad66"/><rect x="10" y="36.1" width="3" height="1.5" fill="#cccac2"/><rect x="14" y="36.1" width="1" height="1.5" fill="#6e7c8e"/><rect x="16" y="36.1" width="7" height="1.5" fill="#6e7c8e"/><rect x="24" y="36.1" width="7" height="1.5" fill="#6e7c8e"/><rect x="1" y="38.1" width="1" height="1.5" fill="#6e7c8e"/><rect x="1" y="40.1" width="1" height="1.5" fill="#6e7c8e"/><rect x="3" y="40.1" width="8" height="1.5" fill="#ffad66"/><rect x="1" y="42.1" width="2" height="1.5" fill="#6e7c8e"/><rect x="0" y="44.1" width="6" height="1.5" fill="#ffad66"/><rect x="7" y="44.1" width="5" height="1.5" fill="#ffad66"/><rect x="13" y="44.1" width="8" height="1.5" fill="#ffad66"/><rect x="22" y="44.1" width="6" height="1.5" fill="#ffd173"/><rect x="28" y="44.1" width="1" height="1.5" fill="#ffd700"/><rect x="29" y="44.1" width="3" height="1.5" fill="#dfbfff"/><rect x="32" y="44.1" width="1" height="1.5" fill="#9a9a98"/><rect x="34" y="44.1" width="14" height="1.5" fill="#73d0ff"/><rect x="48" y="44.1" width="1" height="1.5" fill="#ffd700"/><rect x="50" y="44.1" width="1" height="1.5" fill="#ffd700"/><rect x="2" y="46.1" width="3" height="1.5" fill="#ffad66"/><rect x="6" y="46.1" width="1" height="1.5" fill="#da70d6"/><rect x="4" y="48.1" width="5" height="1.5" fill="#ffad66"/><rect x="10" y="48.1" width="4" height="1.5" fill="#cccac2"/><rect x="15" y="48.1" width="1" height="1.5" fill="#f29e74"/><rect x="17" y="48.1" width="5" height="1.5" fill="#ffad66"/><rect x="23" y="48.1" width="3" height="1.5" fill="#dfbfff"/><rect x="26" y="48.1" width="1" height="1.5" fill="#f29e74"/><rect x="27" y="48.1" width="7" height="1.5" fill="#ffd173"/><rect x="34" y="48.1" width="1" height="1.5" fill="#179fff"/><rect x="35" y="48.1" width="1" height="1.5" fill="#ffd700"/><rect x="37" y="48.1" width="8" height="1.5" fill="#cccac2"/><rect x="45" y="48.1" width="1" height="1.5" fill="#9a9a98"/><rect x="47" y="48.1" width="6" height="1.5" fill="#5ccfe6"/><rect x="53" y="48.1" width="1" height="1.5" fill="#9a9a98"/><rect x="55" y="48.1" width="8" height="1.5" fill="#cccac2"/><rect x="63" y="48.1" width="1" height="1.5" fill="#9a9a98"/><rect x="65" y="48.1" width="6" height="1.5" fill="#5ccfe6"/><rect x="72" y="48.1" width="1" height="1.5" fill="#ffd700"/><rect x="73" y="48.1" width="3" height="1.5" fill="#179fff"/><rect x="76" y="48.1" width="1" height="1.5" fill="#9a9a98"/><rect x="4" y="52.1" width="5" height="1.5" fill="#ffad66"/><rect x="10" y="52.1" width="5" height="1.5" fill="#cccac2"/><rect x="15" y="52.1" width="1" height="1.5" fill="#9a9a98"/><rect x="17" y="52.1" width="24" height="1.5" fill="#73d0ff"/><rect x="42" y="52.1" width="1" height="1.5" fill="#f29e74"/><rect x="44" y="52.1" width="1" height="1.5" fill="#179fff"/><rect x="6" y="54.1" width="8" height="1.5" fill="#cccac2"/><rect x="14" y="54.1" width="1" height="1.5" fill="#9a9a98"/><rect x="16" y="54.1" width="20" height="1.5" fill="#d5ff80"/><rect x="36" y="54.1" width="1" height="1.5" fill="#9a9a98"/><rect x="6" y="56.1" width="14" height="1.5" fill="#cccac2"/><rect x="20" y="56.1" width="1" height="1.5" fill="#9a9a98"/><rect x="22" y="56.1" width="1" height="1.5" fill="#ffd700"/><rect x="8" y="58.1" width="8" height="1.5" fill="#cccac2"/><rect x="16" y="58.1" width="1" height="1.5" fill="#9a9a98"/><rect x="18" y="58.1" width="4" height="1.5" fill="#cccac2"/><rect x="22" y="58.1" width="1" height="1.5" fill="#f29e74"/><rect x="23" y="58.1" width="8" height="1.5" fill="#cccac2"/><rect x="31" y="58.1" width="1" height="1.5" fill="#9a9a98"/><rect x="8" y="60.1" width="8" height="1.5" fill="#cccac2"/><rect x="16" y="60.1" width="1" height="1.5" fill="#9a9a98"/><rect x="18" y="60.1" width="4" height="1.5" fill="#cccac2"/><rect x="22" y="60.1" width="1" height="1.5" fill="#f29e74"/><rect x="23" y="60.1" width="8" height="1.5" fill="#cccac2"/><rect x="31" y="60.1" width="1" height="1.5" fill="#9a9a98"/><rect x="6" y="62.1" width="1" height="1.5" fill="#ffd700"/><rect x="7" y="62.1" width="1" height="1.5" fill="#9a9a98"/><rect x="6" y="64.1" width="8" height="1.5" fill="#cccac2"/><rect x="14" y="64.1" width="1" height="1.5" fill="#9a9a98"/><rect x="16" y="64.1" width="7" height="1.5" fill="#cccac2"/><rect x="23" y="64.1" width="1" height="1.5" fill="#f29e74"/><rect x="24" y="64.1" width="18" height="1.5" fill="#cccac2"/><rect x="42" y="64.1" width="1" height="1.5" fill="#9a9a98"/><rect x="4" y="66.1" width="1" height="1.5" fill="#179fff"/><rect x="5" y="66.1" width="1" height="1.5" fill="#9a9a98"/><rect x="4" y="70.1" width="5" height="1.5" fill="#ffad66"/><rect x="10" y="70.1" width="6" height="1.5" fill="#cccac2"/><rect x="17" y="70.1" width="1" height="1.5" fill="#f29e74"/><rect x="19" y="70.1" width="26" height="1.5" fill="#ffd173"/><rect x="45" y="70.1" width="1" height="1.5" fill="#179fff"/><rect x="46" y="70.1" width="2" height="1.5" fill="#ffd700"/><rect x="48" y="70.1" width="1" height="1.5" fill="#179fff"/><rect x="49" y="70.1" width="1" height="1.5" fill="#9a9a98"/><rect x="4" y="72.1" width="5" height="1.5" fill="#ffad66"/><rect x="10" y="72.1" width="7" height="1.5" fill="#cccac2"/><rect x="18" y="72.1" width="1" height="1.5" fill="#f29e74"/><rect x="20" y="72.1" width="3" height="1.5" fill="#f29e74"/><rect x="24" y="72.1" width="19" height="1.5" fill="#73d0ff"/><rect x="43" y="72.1" width="1" height="1.5" fill="#179fff"/><rect x="44" y="72.1" width="5" height="1.5" fill="#cccac2"/><rect x="49" y="72.1" width="1" height="1.5" fill="#179fff"/><rect x="50" y="72.1" width="1" height="1.5" fill="#9a9a98"/><rect x="4" y="74.1" width="5" height="1.5" fill="#ffad66"/><rect x="10" y="74.1" width="8" height="1.5" fill="#cccac2"/><rect x="19" y="74.1" width="1" height="1.5" fill="#f29e74"/><rect x="21" y="74.1" width="5" height="1.5" fill="#ffad66"/><rect x="27" y="74.1" width="6" height="1.5" fill="#cccac2"/><rect x="33" y="74.1" width="1" height="1.5" fill="#f29e74"/><rect x="34" y="74.1" width="4" height="1.5" fill="#ffd173"/><rect x="38" y="74.1" width="1" height="1.5" fill="#179fff"/><rect x="39" y="74.1" width="7" height="1.5" fill="#cccac2"/><rect x="46" y="74.1" width="1" height="1.5" fill="#179fff"/><rect x="47" y="74.1" width="1" height="1.5" fill="#9a9a98"/><rect x="4" y="78.1" width="5" height="1.5" fill="#ffad66"/><rect x="10" y="78.1" width="20" height="1.5" fill="#cccac2"/><rect x="31" y="78.1" width="1" height="1.5" fill="#f29e74"/><rect x="33" y="78.1" width="8" height="1.5" fill="#cccac2"/><rect x="41" y="78.1" width="1" height="1.5" fill="#f29e74"/><rect x="42" y="78.1" width="20" height="1.5" fill="#cccac2"/><rect x="62" y="78.1" width="1" height="1.5" fill="#f29e74"/><rect x="63" y="78.1" width="1" height="1.5" fill="#9a9a98"/><rect x="4" y="82.1" width="6" height="1.5" fill="#ffad66"/><rect x="11" y="82.1" width="1" height="1.5" fill="#179fff"/><rect x="6" y="84.1" width="4" height="1.5" fill="#cccac2"/><rect x="10" y="84.1" width="1" height="1.5" fill="#9a9a98"/><rect x="12" y="84.1" width="1" height="1.5" fill="#ffd700"/><rect x="8" y="86.1" width="7" height="1.5" fill="#cccac2"/><rect x="15" y="86.1" width="1" height="1.5" fill="#9a9a98"/><rect x="17" y="86.1" width="20" height="1.5" fill="#cccac2"/><rect x="37" y="86.1" width="1" height="1.5" fill="#f29e74"/><rect x="38" y="86.1" width="7" height="1.5" fill="#cccac2"/><rect x="45" y="86.1" width="1" height="1.5" fill="#9a9a98"/><rect x="8" y="88.1" width="11" height="1.5" fill="#cccac2"/><rect x="19" y="88.1" width="1" height="1.5" fill="#9a9a98"/><rect x="21" y="88.1" width="20" height="1.5" fill="#cccac2"/><rect x="41" y="88.1" width="1" height="1.5" fill="#f29e74"/><rect x="42" y="88.1" width="11" height="1.5" fill="#cccac2"/><rect x="53" y="88.1" width="1" height="1.5" fill="#9a9a98"/><rect x="8" y="90.1" width="12" height="1.5" fill="#cccac2"/><rect x="20" y="90.1" width="1" height="1.5" fill="#9a9a98"/><rect x="22" y="90.1" width="20" height="1.5" fill="#cccac2"/><rect x="42" y="90.1" width="1" height="1.5" fill="#f29e74"/><rect x="43" y="90.1" width="12" height="1.5" fill="#cccac2"/><rect x="55" y="90.1" width="1" height="1.5" fill="#9a9a98"/><rect x="8" y="92.1" width="9" height="1.5" fill="#cccac2"/><rect x="17" y="92.1" width="1" height="1.5" fill="#9a9a98"/><rect x="19" y="92.1" width="20" height="1.5" fill="#cccac2"/><rect x="39" y="92.1" width="1" height="1.5" fill="#f29e74"/><rect x="40" y="92.1" width="9" height="1.5" fill="#cccac2"/><rect x="49" y="92.1" width="1" height="1.5" fill="#9a9a98"/><rect x="6" y="94.1" width="1" height="1.5" fill="#ffd700"/><rect x="7" y="94.1" width="1" height="1.5" fill="#9a9a98"/><rect x="4" y="96.1" width="1" height="1.5" fill="#179fff"/><rect x="5" y="96.1" width="1" height="1.5" fill="#9a9a98"/><rect x="2" y="98.1" width="1" height="1.5" fill="#da70d6"/><rect x="4" y="98.1" width="5" height="1.5" fill="#ffad66"/><rect x="10" y="98.1" width="1" height="1.5" fill="#da70d6"/><rect x="11" y="98.1" width="5" height="1.5" fill="#cccac2"/><rect x="16" y="98.1" width="1" height="1.5" fill="#9a9a98"/><rect x="18" y="98.1" width="3" height="1.5" fill="#5ccfe6"/><rect x="21" y="98.1" width="1" height="1.5" fill="#da70d6"/><rect x="23" y="98.1" width="1" height="1.5" fill="#da70d6"/><rect x="4" y="100.1" width="2" height="1.5" fill="#ffad66"/><rect x="7" y="100.1" width="1" height="1.5" fill="#179fff"/><rect x="8" y="100.1" width="15" height="1.5" fill="#ffd173"/><rect x="23" y="100.1" width="1" height="1.5" fill="#ffd700"/><rect x="24" y="100.1" width="5" height="1.5" fill="#cccac2"/><rect x="29" y="100.1" width="1" height="1.5" fill="#ffd700"/><rect x="30" y="100.1" width="1" height="1.5" fill="#179fff"/><rect x="32" y="100.1" width="6" height="1.5" fill="#ffad66"/><rect x="39" y="100.1" width="5" height="1.5" fill="#cccac2"/><rect x="44" y="100.1" width="1" height="1.5" fill="#9a9a98"/><rect x="4" y="104.1" width="5" height="1.5" fill="#ffad66"/><rect x="10" y="104.1" width="3" height="1.5" fill="#cccac2"/><rect x="14" y="104.1" width="1" height="1.5" fill="#f29e74"/><rect x="16" y="104.1" width="3" height="1.5" fill="#f29e74"/><rect x="20" y="104.1" width="8" height="1.5" fill="#73d0ff"/><rect x="28" y="104.1" width="1" height="1.5" fill="#179fff"/><rect x="29" y="104.1" width="7" height="1.5" fill="#d5ff80"/><rect x="37" y="104.1" width="12" height="1.5" fill="#d5ff80"/><rect x="50" y="104.1" width="5" height="1.5" fill="#d5ff80"/><rect x="55" y="104.1" width="1" height="1.5" fill="#179fff"/><rect x="56" y="104.1" width="1" height="1.5" fill="#9a9a98"/><rect x="4" y="106.1" width="3" height="1.5" fill="#cccac2"/><rect x="7" y="106.1" width="1" height="1.5" fill="#f29e74"/><rect x="8" y="106.1" width="11" height="1.5" fill="#ffd173"/><rect x="19" y="106.1" width="1" height="1.5" fill="#179fff"/><rect x="20" y="106.1" width="21" height="1.5" fill="#d5ff80"/><rect x="41" y="106.1" width="1" height="1.5" fill="#179fff"/><rect x="42" y="106.1" width="1" height="1.5" fill="#9a9a98"/><rect x="4" y="108.1" width="3" height="1.5" fill="#cccac2"/><rect x="7" y="108.1" width="1" height="1.5" fill="#f29e74"/><rect x="8" y="108.1" width="14" height="1.5" fill="#ffd173"/><rect x="22" y="108.1" width="1" height="1.5" fill="#179fff"/><rect x="23" y="108.1" width="1" height="1.5" fill="#ffd700"/><rect x="25" y="108.1" width="6" height="1.5" fill="#cccac2"/><rect x="31" y="108.1" width="1" height="1.5" fill="#9a9a98"/><rect x="33" y="108.1" width="8" height="1.5" fill="#d5ff80"/><rect x="41" y="108.1" width="1" height="1.5" fill="#9a9a98"/><rect x="43" y="108.1" width="4" height="1.5" fill="#cccac2"/><rect x="47" y="108.1" width="1" height="1.5" fill="#9a9a98"/><rect x="49" y="108.1" width="5" height="1.5" fill="#cccac2"/><rect x="54" y="108.1" width="1" height="1.5" fill="#f29e74"/><rect x="55" y="108.1" width="7" height="1.5" fill="#cccac2"/><rect x="63" y="108.1" width="1" height="1.5" fill="#ffd700"/><rect x="64" y="108.1" width="1" height="1.5" fill="#179fff"/><rect x="65" y="108.1" width="1" height="1.5" fill="#9a9a98"/><rect x="4" y="110.1" width="6" height="1.5" fill="#ffad66"/><rect x="11" y="110.1" width="3" height="1.5" fill="#cccac2"/><rect x="14" y="110.1" width="1" height="1.5" fill="#9a9a98"/><rect x="2" y="112.1" width="1" height="1.5" fill="#da70d6"/><rect x="0" y="114.1" width="1" height="1.5" fill="#ffd700"/></svg></div><div class="a" style="left:0;top:0;width:1847px;height:974px;border:1px solid #171b24;pointer-events:none"></div></body></html>
